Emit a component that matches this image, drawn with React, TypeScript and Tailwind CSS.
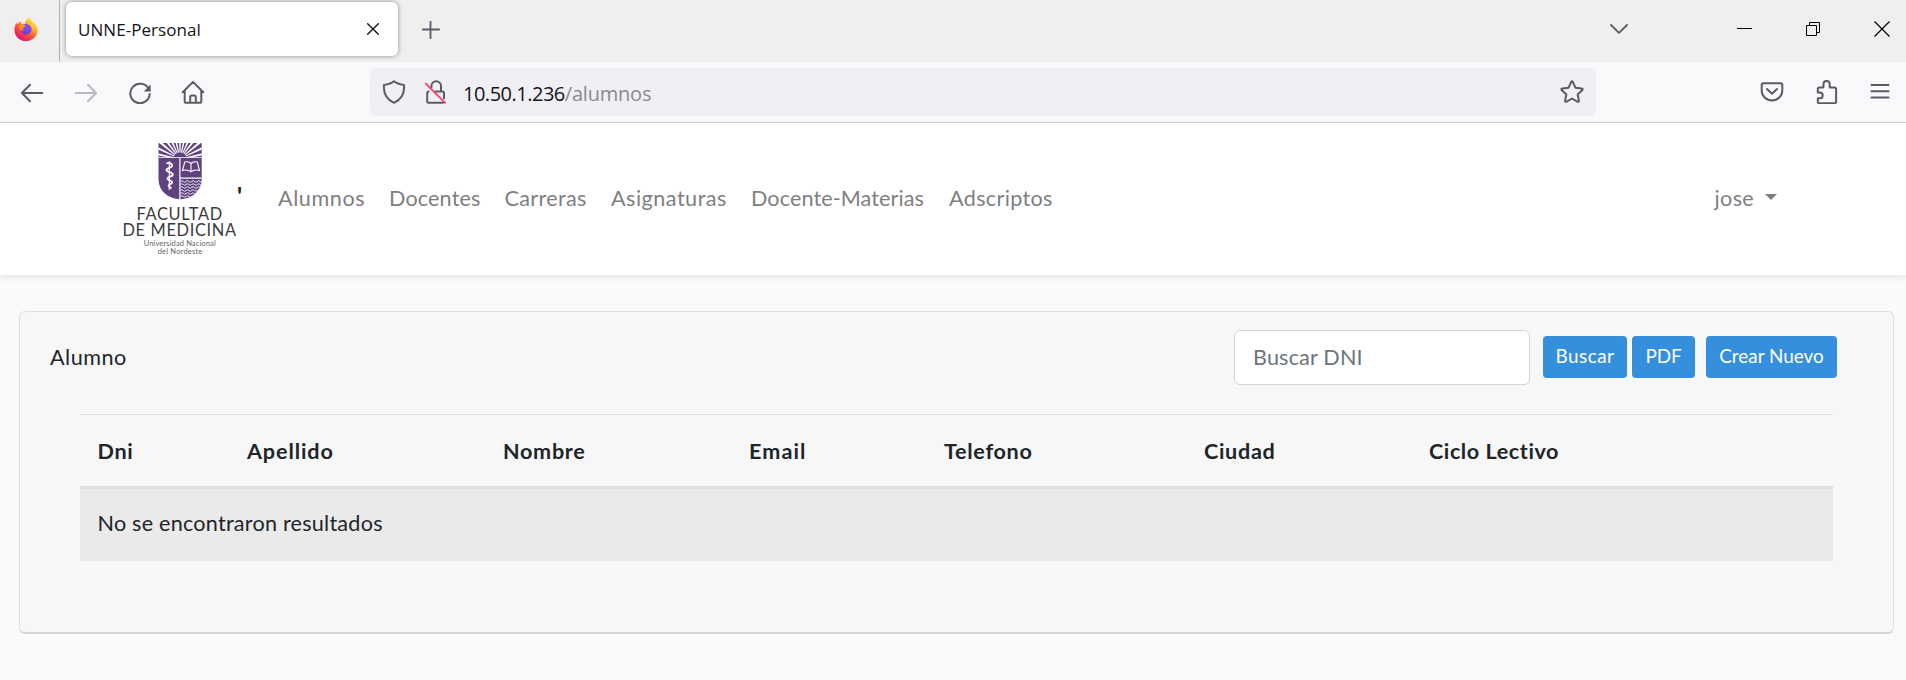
import type { ReactNode } from "react";

function Icon({ className = "", children }: { className?: string; children: ReactNode }) {
  return (
    <svg
      width="24"
      height="24"
      viewBox="0 0 24 24"
      fill="none"
      stroke="#5b5b66"
      strokeWidth="2"
      strokeLinecap="round"
      strokeLinejoin="round"
      className={`block shrink-0 ${className}`}
    >
      {children}
    </svg>
  );
}

function FirefoxLogo() {
  return (
    <svg width="24" height="24" viewBox="0 0 24 24" className="ml-[14px] -mt-[4px] block shrink-0">
      <defs>
        <linearGradient id="ffBody" x1="0.85" y1="0.1" x2="0.25" y2="0.95">
          <stop offset="0" stopColor="#fff04a" />
          <stop offset="0.35" stopColor="#ffa02a" />
          <stop offset="0.65" stopColor="#ff4a3d" />
          <stop offset="1" stopColor="#e4117f" />
        </linearGradient>
        <radialGradient id="ffGlobe" cx="0.6" cy="0.3" r="0.8">
          <stop offset="0" stopColor="#9a4bff" />
          <stop offset="1" stopColor="#4f3fd0" />
        </radialGradient>
      </defs>
      <path
        d="M14.6.4c1.800 1.300 3 2.900 3.400 4.400 1-.2 1.700.4 2.300 1.400 2 2 3.200 4.500 3.200 7.200C23.500 19.500 18.400 24 12 24S.4 19.200.4 12.900c0-3.100.9-5.600 2.500-7.500.1 1 .4 1.500.8 1.800C4.600 5.700 5.500 4.900 6.700 4.300c-.2 1 .1 1.900.9 2.500 1-.2 2 0 2.900.4.400-2.700 2-4.800 4.100-6.800z"
        fill="url(#ffBody)"
      />
      <circle cx="12.2" cy="12.300" r="5.200" fill="url(#ffGlobe)" />
      <path d="M5 8.200c2.200-1.200 4.800-.9 6.600.8-.7 1.400-2.500 1.300-3 2.200-.3.800.4 1.800 1.600 2.200-2.400.9-5.400-.6-5.200-5.200z" fill="#ff9a1f" />
      <path d="M14 6.500c3.200 1 4.800 3.800 4.200 7 1.500-1 1.800-3 1.300-5L16 4z" fill="#ffc72e" />
    </svg>
  );
}

function TabBar() {
  return (
    <div className="flex h-[62px] items-center bg-[#efefef]">
      <FirefoxLogo />
      <div className="ml-[21px] h-full w-px bg-[#b0b0b0]" />
      <div className="-mt-[4px] ml-[6px] flex h-[54px] w-[332px] items-center rounded-[6px] bg-white shadow-[0_0_5px_rgba(0,0,0,0.42)]">
        <span className="ml-[12px] pt-px font-['Open_Sans',sans-serif] text-[17px] leading-6 tracking-[0.05px] text-[#15141a]">UNNE-Personal</span>
        <svg width="12" height="12" viewBox="0 0 12 12" className="mr-[19px] ml-auto block" stroke="#15141a" strokeWidth="1.4" strokeLinecap="round">
          <path d="M.7.7l10.600 10.600M11.300.7L.7 11.300" />
        </svg>
      </div>
      <svg width="18" height="18" viewBox="0 0 18 18" className="-mt-[2px] ml-[24px] block" stroke="#5b5b66" strokeWidth="1.800" strokeLinecap="round">
        <path d="M8.500 .8v16.400M.8 8.500h16.400" />
      </svg>
      <svg width="18" height="10" viewBox="0 0 18 10" className="-mt-[5px] mr-[109px] ml-auto block" fill="none" stroke="#5b5b66" strokeWidth="1.800" strokeLinecap="round" strokeLinejoin="round">
        <path d="M1 1l8 7.800L17 1" />
      </svg>
      <div className="-mt-[5px] mr-[54px] h-px w-[15px] bg-black" />
      <svg width="14" height="14" viewBox="0 0 14 14" className="-mt-[4px] mr-[54px] block" fill="none" stroke="#000">
        <path d="M.5 3.500h10v10H.5zM3.500 3.500v-3h10v10h-3" />
      </svg>
      <svg width="16" height="16" viewBox="0 0 16 16" className="-mt-[4px] mr-[16px] block" stroke="#000" strokeWidth="1.200">
        <path d="M.5.500l15 15M15.500.500l-15 15" />
      </svg>
    </div>
  );
}

function Toolbar() {
  return (
    <div className="flex h-[61px] items-center border-b border-[#cccccd] bg-[#f9f9fb]">
      <div className="ml-[20px] flex w-[350px] gap-[30px]">
        <Icon>
          <path d="M22.300 13H2.500M10 4.800L1.900 13l8.100 8.200" />
        </Icon>
        <Icon className="opacity-40">
          <path d="M1.700 13h19.800M14 4.800l8.100 8.200-8.100 8.200" />
        </Icon>
        <Icon>
          <path d="M20.800 9.300A9.700 9.700 0 1 0 21.700 14" />
          <path d="M22.700 4.600v7h-7z" fill="#5b5b66" stroke="none" />
        </Icon>
        <Icon className="-ml-px">
          <path d="M1.700 12.300L12 1.900l10.300 10.400M3.700 10.800v10.400q0 1.600 1.600 1.600h13.400q1.600 0 1.600-1.600V10.800M9.200 22.500v-5.400q0-1.600 1.600-1.600h2.400q1.600 0 1.600 1.600v5.400" />
        </Icon>
      </div>
      <div className="flex h-[48px] w-[1226px] items-center rounded-[6px] bg-[#f0f0f4]">
        <Icon className="ml-[12px]">
          <path d="M12 1.200C9.300 3.500 6 4.300 2 4.900c-.7 8 2.300 14.600 10 17.900 7.700-3.300 10.700-9.900 10-17.900-4-.6-7.300-1.400-10-3.700z" />
        </Icon>
        <Icon className="ml-[18px]">
          <path d="M7.400 7.500V6a4.800 4.800 0 0 1 9.600 0v5.300M4.500 11.600q-1.300 0-1.300 1.500v8.200q0 1.500 1.500 1.500h13.600q1 0 1.400-.8M11.600 11.600h7q1.400 0 1.400 1.500v5.400" />
          <path d="M1.800 3.600l19.400 19.200" stroke="#ff3d66" strokeWidth="1.800" />
        </Icon>
        <span className="ml-[15px] pt-[4px] font-['Open_Sans',sans-serif] text-[20px] leading-7 tracking-[-0.5px] text-[#15141a]">
          10.50.1.236<span className="tracking-[-0.2px] text-[#8a8a90]">/alumnos</span>
        </span>
        <Icon className="mr-[12px] ml-auto">
          <path d="M11 2.300q1-1.900 2 0l2.500 5.500 6.100.7q1.800.4.600 1.800l-4.600 4.100 1.300 6.100q.2 1.900-1.500 1.100L12 18.500l-5.400 3.100q-1.700.8-1.500-1.100l1.300-6.100-4.600-4.100q-1.200-1.400.6-1.800l6.100-.7z" />
        </Icon>
      </div>
      <Icon className="ml-[164px]">
        <path d="M3.500 3.200h17q1.800 0 1.800 1.800v5.500a10.300 9.900 0 0 1-20.600 0V5q0-1.800 1.800-1.800z" />
        <path d="M7 9l5 4.800L17 9" />
      </Icon>
      <Icon className="ml-[31px]">
        <path d="M8.400 7.400h-4q-1.600 0-1.600 1.500v3.600h2a2.900 2.900 0 0 1 0 5.800h-2v3.400q0 1.500 1.500 1.500h15.300q1.500 0 1.500-1.500V8.900q0-1.500-1.500-1.500h-4.900V4a3.100 3.100 0 0 0-6.200 0z" />
      </Icon>
      <Icon className="ml-[29px]">
        <path d="M3.500 5h17M3.500 11.300h17M3.500 17.600h17" />
      </Icon>
    </div>
  );
}

const RAYS = [-78, -64, -50, -37, -25, -12.500, 0, 12.500, 25, 37, 50, 64, 78];

function FacultyLogo() {
  return (
    <svg width="116" height="116" viewBox="122 141 116 116" className="block shrink-0">
      <defs>
        <clipPath id="shield">
          <path d="M158.500 143h43.200v36c0 12-9 19.500-21.600 20.300-12.600-.8-21.600-8.300-21.600-20.300z" />
        </clipPath>
      </defs>
      <g clipPath="url(#shield)">
        <rect x="158" y="142" width="44" height="58" fill="#5f4180" />
        <g fill="#fff">
          {RAYS.map((a) => (
            <path key={a} d="M179.500 152.500h1l.9-25h-2.800z" transform={`rotate(${a} 180 159)`} />
          ))}
        </g>
        <path d="M158 158v-.8h44v.8zM179.300 158h1.200v42h-1.200zM180 177.500h22v1.200h-22z" fill="#fff" />
        <path d="M169.300 161v29" stroke="#fff" strokeWidth="1.100" />
        <path
          d="M166.500 163.500c3-1.500 6 .3 5.600 2.300-.4 2.300-5.500 1.700-5.700 4.100-.2 2.300 6.600 2 6.400 4.700-.2 2.300-5.300 1.900-5.400 4 0 2 4.800 1.600 4.700 3.700-.1 1.800-3.300 1.700-3.500 3.300 0 1.400 2.200 1.300 2.500 3"
          fill="none"
          stroke="#fff"
          strokeWidth="1.900"
        />
        <path
          d="M191 163.500c-2-2-4.500-2-6.300-1.400l-2.200 8.400c3-.8 6-.6 8.500 1.200 2.500-1.800 5.500-2 8.500-1.200l-2.200-8.400c-1.800-.6-4.300-.6-6.300 1.400zm0 0v8.200"
          fill="none"
          stroke="#fff"
          strokeWidth="1.100"
        />
        {[181.5, 184.500, 187.500, 190.500, 193.500, 196.500].map((y) => (
          <path key={y} d={`M180.500 ${y}q1.400-1.600 2.800 0t2.800 0 2.800 0 2.800 0 2.800 0 2.800 0 2.800 0 2.800 0`} fill="none" stroke="#fff" strokeWidth="0.900" />
        ))}
      </g>
      <g fill="#3d3b3d" fontFamily="Lato, sans-serif">
        <text x="136.500" y="220.300" fontSize="16.400" textLength="85.800">FACULTAD</text>
        <text x="122.500" y="236" fontSize="16.400" textLength="113.500">DE MEDICINA</text>
        <text x="143.700" y="245.800" fontSize="7.500" textLength="72" fill="#656365">Universidad Nacional</text>
        <text x="157.700" y="254.400" fontSize="7.500" textLength="44.500" fill="#656365">del Nordeste</text>
      </g>
    </svg>
  );
}

function Navbar() {
  return (
    <nav className="relative flex h-[152px] items-center bg-white text-[21.6px] leading-8 whitespace-nowrap text-[#7f7f7f] shadow-[0_3px_6px_rgba(0,0,0,0.075)]">
      <div className="ml-[122px] flex w-[156px]">
        <FacultyLogo />
        <span className="-ml-px mt-[39px] text-[24.3px] font-bold text-[#1a1a1a]">'</span>
      </div>
      <div className="-mt-[3px] flex">
        <a className="w-[111px] tracking-[0.6px]">Alumnos</a>
        <a className="w-[115.5px] tracking-[0.14px]">Docentes</a>
        <a className="w-[106.500px] tracking-[0.32px]">Carreras</a>
        <a className="w-[140px] tracking-[0.48px]">Asignaturas</a>
        <a className="w-[198px] tracking-[0.09px]">Docente-Materias</a>
        <a className="tracking-[0.33px]">Adscriptos</a>
      </div>
      <a className="-mt-[3px] mr-[129px] ml-auto flex items-center gap-[11px] tracking-[0.3px]">
        jose
        <span className="-mt-px border-x-[6.5px] border-t-[6.5px] border-x-transparent border-t-[#7f7f7f]" />
      </a>
    </nav>
  );
}

function Button({ className, children }: { className: string; children: string }) {
  return (
    <button className={`h-[42px] shrink-0 rounded-[4px] bg-[#3490dc] pb-[2px] text-center text-[18.9px] text-white ${className}`}>
      {children}
    </button>
  );
}

function AlumnoCard() {
  return (
    <section className="mt-[36px] ml-[19px] h-[323px] w-[1875px] rounded-[6px] border border-b-2 border-[#dfdfdf] border-b-[#d6d6d6] bg-[#f7f7f7]">
      <header className="flex h-[90px] items-center pr-[56px] pl-[30px] whitespace-nowrap">
        <span className="tracking-[0.5px]">Alumno</span>
        <input
          placeholder="Buscar DNI"
          className="mr-[13px] ml-auto h-[55px] w-[296px] rounded-[6px] border border-[#ced4da] bg-white px-[18px] tracking-[0.17px] placeholder:text-[#6c757d]"
        />
        <Button className="mr-[5px] w-[84px] tracking-[0.49px]">Buscar</Button>
        <Button className="mr-[11px] w-[63px] tracking-[-0.1px]">PDF</Button>
        <Button className="w-[131px]">Crear Nuevo</Button>
      </header>
      <table className="mt-[12px] ml-[60px] w-[1753px] table-fixed text-left whitespace-nowrap">
        <thead>
          <tr className="h-[73px] border-t border-b-[3px] border-t-[#dee2e6] border-b-[#dee2e6]">
            <th className="w-[167px] pl-[17.5px] font-bold tracking-[0.7px]">Dni</th>
            <th className="w-[256px] font-bold tracking-[0.89px]">Apellido</th>
            <th className="w-[246px] font-bold tracking-[0.700px]">Nombre</th>
            <th className="w-[195px] font-bold tracking-[1.1px]">Email</th>
            <th className="w-[260px] font-bold tracking-[0.69px]">Telefono</th>
            <th className="w-[225px] font-bold tracking-[0.67px]">Ciudad</th>
            <th className="font-bold tracking-[0.56px]">Ciclo Lectivo</th>
          </tr>
        </thead>
        <tbody>
          <tr className="h-[73px] bg-[#eaeaea]">
            <td colSpan={7} className="pb-[3px] pl-[17.5px] tracking-[0.23px]">No se encontraron resultados</td>
          </tr>
        </tbody>
      </table>
    </section>
  );
}

export default function App() {
  return (
    <div className="h-[680px] w-[1906px] overflow-hidden bg-[#f8fafc] font-['Lato',sans-serif] text-[#212529]">
      <TabBar />
      <Toolbar />
      <Navbar />
      <main className="flow-root text-[21.6px] leading-8">
        <AlumnoCard />
      </main>
    </div>
  );
}
